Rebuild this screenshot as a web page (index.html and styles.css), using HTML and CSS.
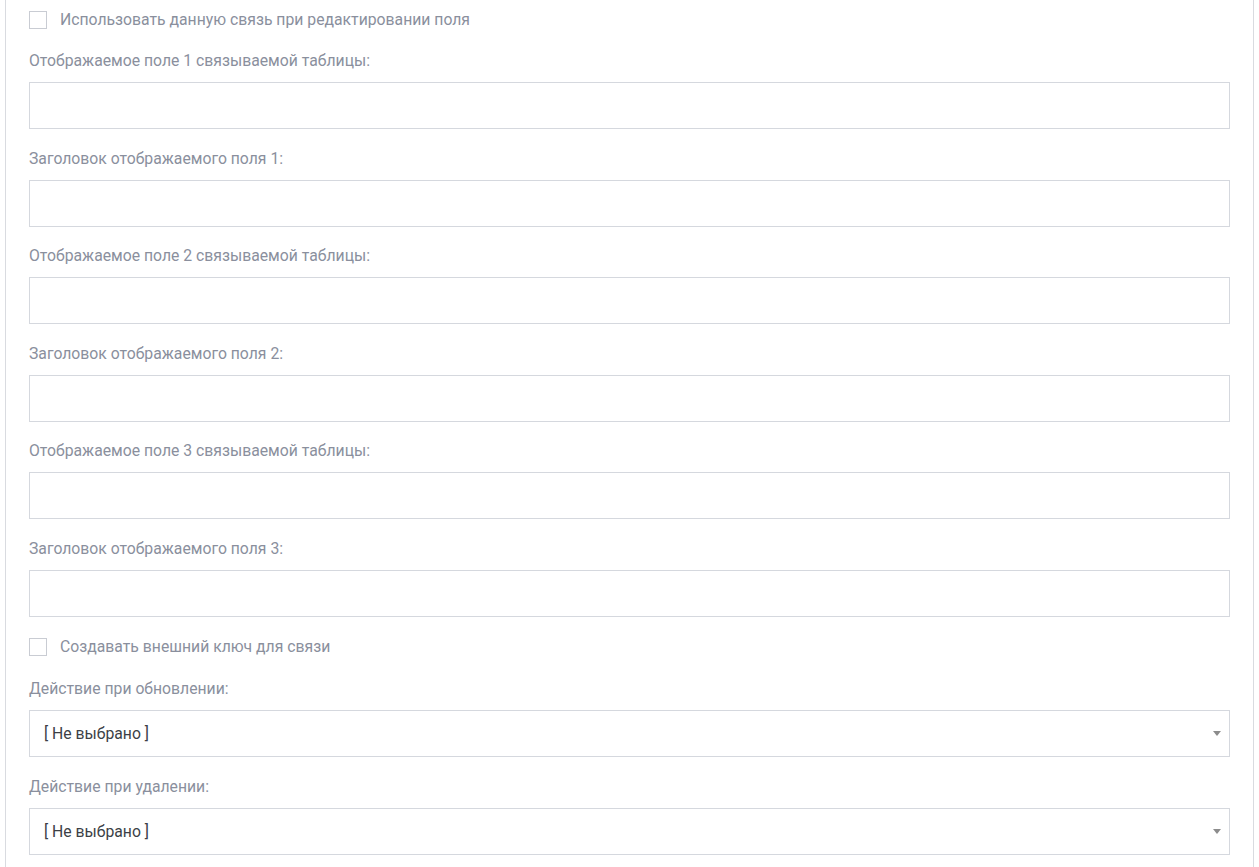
FILE: index.html
```html
<!DOCTYPE html>
<html lang="ru">
<head>
<meta charset="utf-8">
<title>Связь</title>
<link rel="stylesheet" href="styles.css">
</head>
<body>
<div class="panel">
  <label class="check-row">
    <span class="check"></span>
    <span class="check-text">Использовать данную связь при редактировании поля</span>
  </label>

  <div class="group">
    <div class="label">Отображаемое поле 1 связываемой таблицы:</div>
    <div class="input"></div>
  </div>
  <div class="group">
    <div class="label">Заголовок отображаемого поля 1:</div>
    <div class="input"></div>
  </div>
  <div class="group">
    <div class="label">Отображаемое поле 2 связываемой таблицы:</div>
    <div class="input"></div>
  </div>
  <div class="group">
    <div class="label">Заголовок отображаемого поля 2:</div>
    <div class="input"></div>
  </div>
  <div class="group">
    <div class="label">Отображаемое поле 3 связываемой таблицы:</div>
    <div class="input"></div>
  </div>
  <div class="group">
    <div class="label">Заголовок отображаемого поля 3:</div>
    <div class="input"></div>
  </div>

  <label class="check-row check-row-2">
    <span class="check"></span>
    <span class="check-text">Создавать внешний ключ для связи</span>
  </label>

  <div class="group group-select">
    <div class="label">Действие при обновлении:</div>
    <div class="input select"><span class="select-text">[ Не выбрано ]</span><span class="caret"></span></div>
  </div>
  <div class="group group-select">
    <div class="label">Действие при удалении:</div>
    <div class="input select"><span class="select-text">[ Не выбрано ]</span><span class="caret"></span></div>
  </div>
</div>
</body>
</html>
```
FILE: styles.css
```css
html, body {
  margin: 0;
  padding: 0;
  background: #ffffff;
}
body {
  font-family: Roboto, "Liberation Sans", Arial, sans-serif;
  font-size: 15.75px;
  color: #8a8f9d;
}
.panel {
  margin: 0 5px;
  border-left: 1px solid #d9dbe0;
  border-right: 1px solid #d9dbe0;
  padding: 10px 23px 30px;
  min-height: 900px;
}
.check-row {
  display: flex;
  align-items: center;
  height: 20px;
  margin-top: 0;
  margin-bottom: 21px;
}
.check {
  width: 16px;
  height: 16px;
  border: 1px solid #c9ccd3;
  background: #fff;
  flex: none;
}
.check-text {
  margin-left: 13px;
  font-size: 15.75px;
  color: #8a8f9d;
  line-height: 20px;
}
.check-row-2 {
  margin-top: 0;
  margin-bottom: 22px;
}
.group {
  margin-bottom: 19.6px;
}
.group-select {
  margin-bottom: 20.4px;
}
.label {
  font-size: 15.75px;
  line-height: 20px;
  height: 20px;
  margin-bottom: 11px;
  color: #8a8f9d;
}
.input {
  box-sizing: border-box;
  height: 47px;
  border: 1px solid #d5d8de;
  background: #fff;
}
.select {
  display: flex;
  align-items: center;
  justify-content: space-between;
  padding: 0 8px 0 14px;
}
.select-text {
  font-size: 15.75px;
  color: #3c3f46;
}
.caret {
  width: 0;
  height: 0;
  border-left: 4px solid transparent;
  border-right: 4px solid transparent;
  border-top: 5px solid #8c8c8c;
}
```
